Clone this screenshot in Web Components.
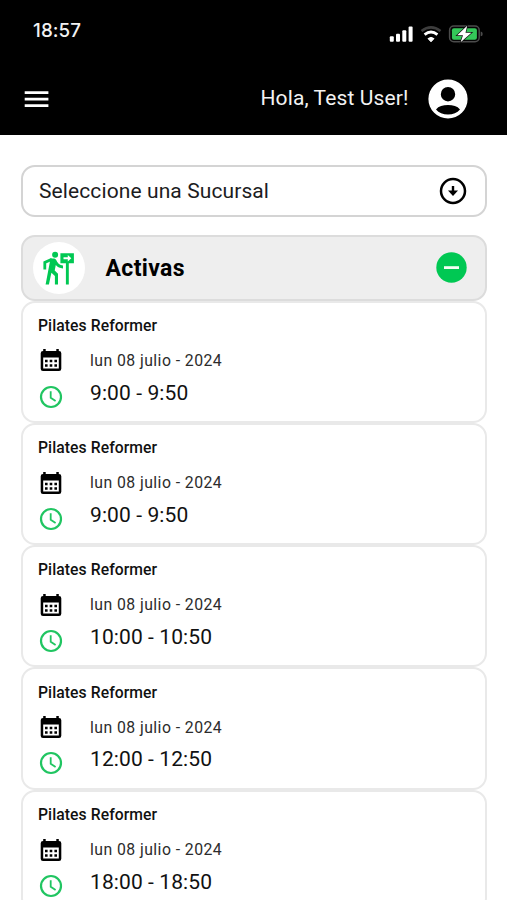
<!DOCTYPE html>
<html lang="es">
<head>
<meta charset="utf-8">
<title>Clases activas</title>
<style>
html,body{margin:0;height:900px;overflow:hidden;background:#fff}
body{font-family:Roboto,"Liberation Sans",sans-serif;color:#1c1c1e}
</style>
</head>
<body>
<app-screen>
  <status-bar slot="top">18:57</status-bar>
  <app-header slot="top">Hola, Test User!</app-header>
  <branch-select>Seleccione una Sucursal</branch-select>
  <section-toggle>Activas</section-toggle>
  <class-card date="lun 08 julio - 2024" time="9:00 - 9:50">Pilates Reformer</class-card>
  <class-card date="lun 08 julio - 2024" time="9:00 - 9:50">Pilates Reformer</class-card>
  <class-card date="lun 08 julio - 2024" time="10:00 - 10:50">Pilates Reformer</class-card>
  <class-card date="lun 08 julio - 2024" time="12:00 - 12:50">Pilates Reformer</class-card>
  <class-card date="lun 08 julio - 2024" time="18:00 - 18:50">Pilates Reformer</class-card>
</app-screen>
<script>
const define = (name, html, ready) => customElements.define(name, class extends HTMLElement {
  constructor() {
    super();
    this.attachShadow({mode: 'open'}).innerHTML =
      '<style>*{box-sizing:border-box}svg{display:block;flex:none}span{white-space:nowrap}</style>' + html;
  }
  connectedCallback() { if (ready) ready(this); }
});

define('app-screen', `
<style>
:host{display:block;height:900px;overflow:hidden}
header{height:134.6px;background:#000;color:#f2f2f2}
main{padding:30.5px 20px 0 21px;display:flex;flex-direction:column}
</style>
<header><slot name="top"></slot></header>
<main><slot></slot></main>`);

define('status-bar', `
<style>
:host{box-sizing:border-box;display:flex;justify-content:space-between;height:62px;padding:19px 23px 0 33px;font:500 18.8px/23px Inter,sans-serif;letter-spacing:.1px}
.icons{display:flex;height:31px}
</style>
<span><slot></slot></span>
<div class="icons">
<svg width="98" height="30" viewBox="386 19 98 30">
  <g fill="#fff">
    <rect x="389.8" y="36.2" width="4" height="5.6" rx="1"/><rect x="396" y="33.7" width="4" height="8.1" rx="1"/>
    <rect x="402.3" y="30.2" width="4" height="11.6" rx="1"/><rect x="408.6" y="26.4" width="4" height="15.4" rx="1"/>
    <path d="M428 38.6Q431 36.2 434 38.6L431 41.8Z" stroke="#fff" stroke-linejoin="round"/>
  </g>
  <path d="M424.6 34.6Q431 29.3 437.4 34.6" fill="none" stroke="#fff" stroke-width="2.8"/>
  <path d="M421.5 31Q431 23.7 440.5 31" fill="none" stroke="#3d3d3d" stroke-width="2.6"/>
  <rect x="449.6" y="26" width="29.6" height="15.8" rx="4.2" fill="#050505" stroke="#4b4b4b" stroke-width="1.5"/>
  <rect x="451.9" y="28.2" width="25" height="11.5" rx="2" fill="#34c759"/>
  <path d="M480.7 31.5q2 .3 2 2.4t-2 2.4z" fill="#4b4b4b"/>
  <path d="M467.2 25.8L457.2 35.2H463L460.6 42.2L471.4 32.7H465.5Z" fill="#fff" stroke="#111" stroke-width="1.4" paint-order="stroke"/>
</svg>
</div>`);

define('app-header', `
<style>
:host{box-sizing:border-box;display:flex;align-items:center;height:73px;padding:0 39.5px 0 24px;font-size:21px;line-height:26px}
span{margin-left:auto;margin-right:19px;letter-spacing:.12px;margin-top:-1px}
</style>
<svg width="25" height="20" viewBox="24.3 88.5 25 20"><path d="M25 92.1H48.7M25 98.7H48.7M25 105.2H48.7" stroke="#fff" stroke-width="2.8"/></svg>
<span><slot></slot></span>
<svg width="40" height="40" viewBox="2 2 20 20"><path fill="#fff" fill-rule="evenodd" d="M12 2.2a9.8 9.8 0 1 0 0 19.6a9.8 9.8 0 0 0 0-19.6ZM12 6a3.6 3.6 0 1 1 0 7.2a3.6 3.6 0 0 1 0-7.2ZM6 17.2C7.3 15.6 9.5 15 12 15S16.7 15.6 18 17.2C16.6 18.8 14.5 19.8 12 19.8S7.4 18.8 6 17.2Z"/></svg>`);

define('branch-select', `
<style>
:host{box-sizing:border-box;display:flex;align-items:center;justify-content:space-between;height:52px;border:2px solid #d4d4d4;border-radius:14px;padding:0 18.5px 0 16px;margin-bottom:18px;font-size:21px}
span{letter-spacing:.1px}
</style>
<span><slot></slot></span>
<svg width="28" height="28" viewBox="0 0 28 28"><circle cx="14" cy="14" r="12" fill="none" stroke="#000" stroke-width="2.5"/><path d="M14 9V14.5" stroke="#000" stroke-width="2.4"/><path d="M9 13.5H19L14 19Z"/></svg>`);

define('section-toggle', `
<style>
:host{box-sizing:border-box;display:flex;align-items:center;height:65.5px;border:2px solid #dcdcdc;border-radius:14px;background:#eee;padding:0 18px 0 10px}
.badge{width:52px;height:52px;border-radius:50%;background:#fff;flex:none}
span{font-weight:700;font-size:23px;color:#000;margin:2px auto 0 20.5px;letter-spacing:.35px}
</style>
<div class="badge"><svg width="52" height="52" viewBox="33 242 52 52" fill="#00c853">
<circle cx="55.1" cy="254.8" r="3"/>
<path d="M51.8 259.2L44.8 262.5V269.5" fill="none" stroke="#00c853" stroke-width="2.8"/>
<path d="M50.5 258.5H54.2Q55.5 258.5 56.2 260Q58.2 265 63 265.5V268.4Q58.5 268.2 55.8 265L54.7 270.5L58 273.7V284.5H54.9V276L51.4 272.7L48.9 284.5H45.6Z"/>
<path fill-rule="evenodd" d="M60.4 253.2H73.9V263.2H68.8V284.5H65.9V263.2H60.4ZM63.5 257.2V259.3H67.8V261.4L71.3 258.2L67.8 255.1V257.2Z"/>
</svg></div>
<span><slot></slot></span>
<svg width="31" height="31" viewBox="0 0 31 31"><circle cx="15.5" cy="15.5" r="15.2" fill="#00c853"/><path d="M8 15.6H23" stroke="#f4fff4" stroke-width="2.8"/></svg>`);

define('class-card', `
<style>
:host{box-sizing:border-box;display:block;flex:none;height:122.3px;border:2px solid #e9e9e9;border-radius:14px;padding:13.2px 15px 0}
h3{margin:0 0 12.6px;font-size:15.7px;line-height:19px;font-weight:500;color:#111;letter-spacing:.08px}
.row{display:grid;grid-template-columns:26px 1fr;column-gap:26px;align-items:center;height:24px}
.time{height:32px;margin-top:9.2px}
.date span{font-size:15.8px;letter-spacing:.44px;color:#2c2c2c}
.time span{font-size:21px;line-height:24px;color:#111;align-self:start;letter-spacing:.1px}
</style>
<h3><slot></slot></h3>
<div class="row date"><svg width="26" height="26" viewBox="0 0 26 26"><path fill="#000" fill-rule="evenodd" d="M5.2 2H7.7V4H18.3V2H20.8V4H21Q23.3 4 23.3 6.3V21.7Q23.3 24 21 24H5Q2.7 24 2.7 21.7V6.3Q2.7 4 5 4H5.2ZM5.2 10.5V21.5H20.8V10.5Z"/><path d="M7 14H19M7 18.5H19" stroke="#000" stroke-width="2.4" stroke-dasharray="2.6 2.1"/></svg><span id="d"></span></div>
<div class="row time"><svg width="26" height="26" viewBox="0 0 26 26" fill="none" stroke="#20c561"><circle cx="13" cy="13" r="10" stroke-width="2.2"/><path d="M12.7 7.3V13.8L17.6 17" stroke-width="1.8"/></svg><span id="t"></span></div>`,
el => {
  el.shadowRoot.getElementById('d').textContent = el.getAttribute('date');
  el.shadowRoot.getElementById('t').textContent = el.getAttribute('time');
});
</script>
</body>
</html>
